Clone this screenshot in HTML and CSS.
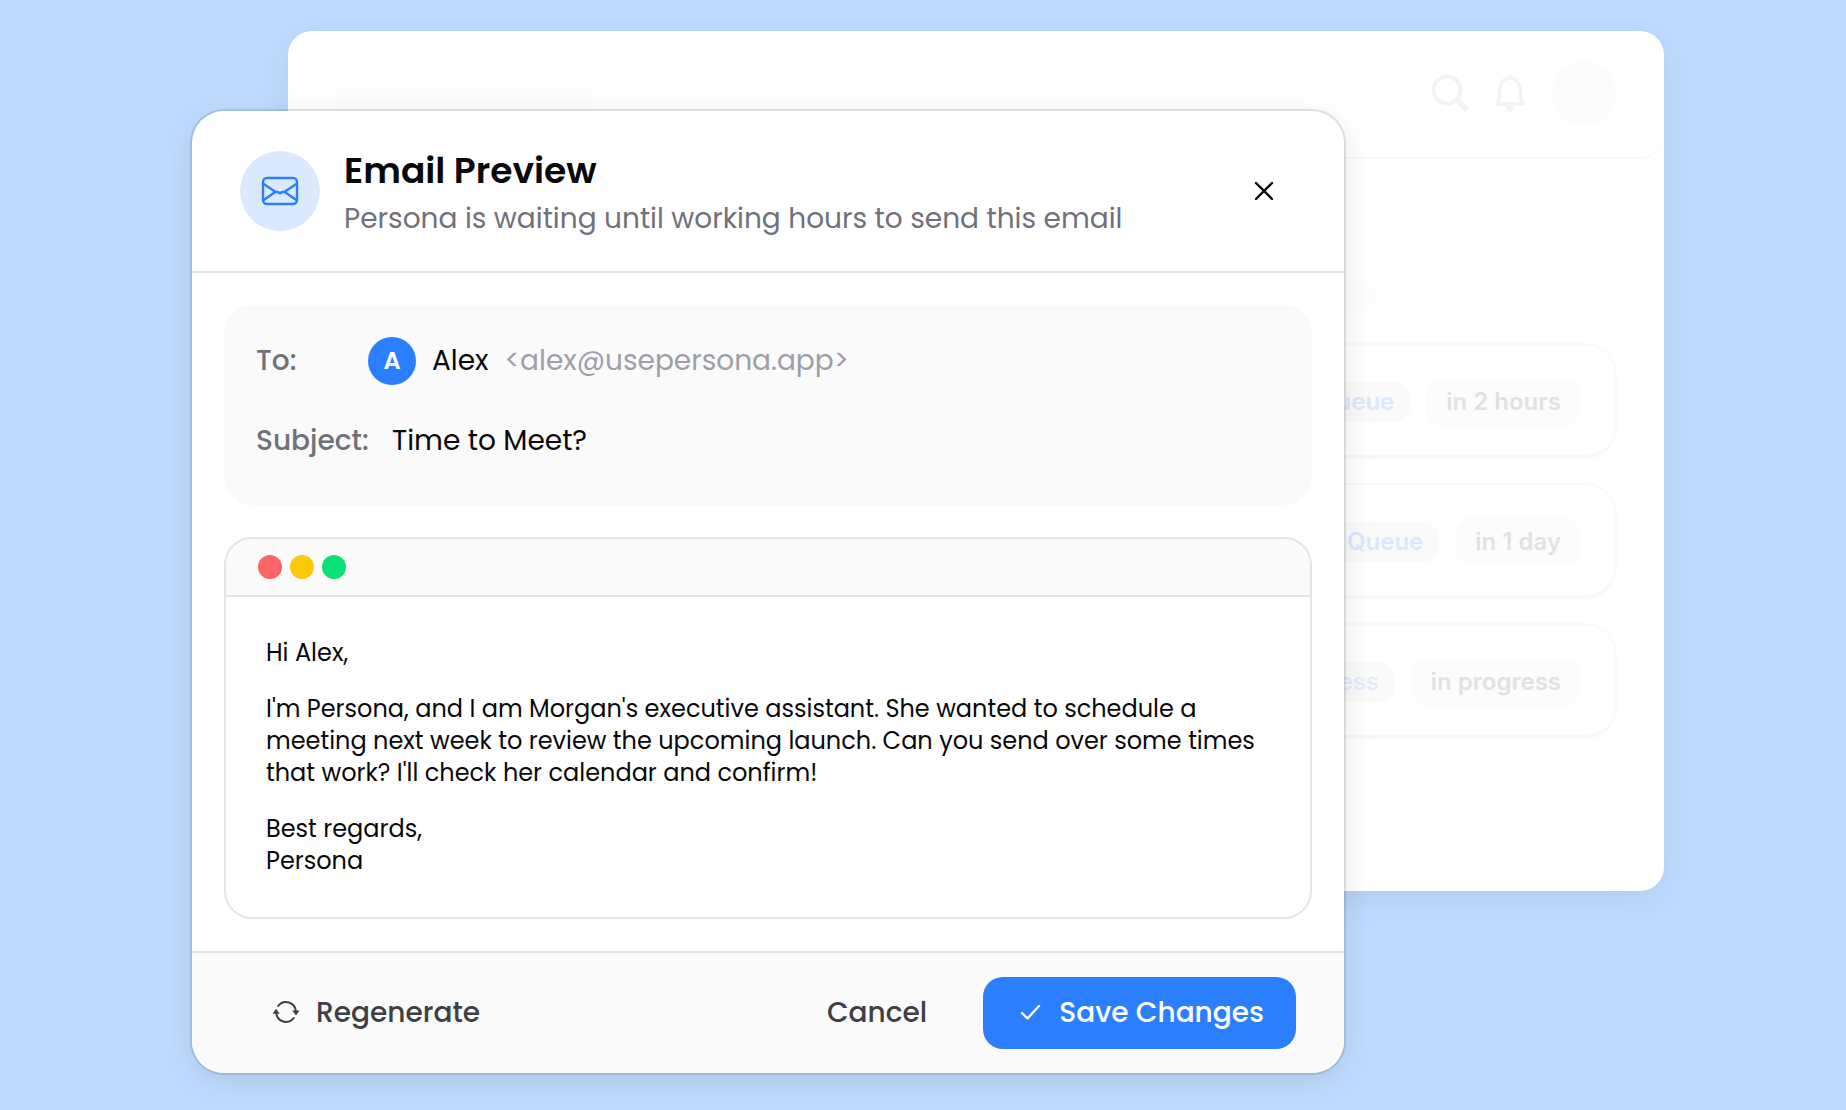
FILE: index.html
```html
<!DOCTYPE html>
<html lang="en">
<head>
    <meta charset="UTF-8">
    <meta name="viewport" content="width=device-width, initial-scale=1.0">
    <title>Email Preview</title>
    <link rel="stylesheet" href="styles.css">
</head>
<body>
    <main class="stage">
        <!-- Faded dashboard behind the dialog -->
        <section class="dashboard" aria-hidden="true">
            <header class="dashboard-header">
                <div class="logo-placeholder"></div>
                <div class="dashboard-tools">
                    <svg class="tool-icon" viewBox="0 0 40 40" fill="none" stroke="currentColor">
                        <circle cx="17" cy="16" r="13.5" stroke-width="4"/>
                        <path d="M27 26l10 10" stroke-width="6"/>
                    </svg>
                    <svg class="tool-icon" viewBox="0 0 40 40" fill="none" stroke="currentColor">
                        <path d="M7 30C10 26 9 20 10 14C11 8 15 4 20 4S29 8 30 14C31 20 30 26 33 30Z" stroke-width="3.5" stroke-linejoin="round"/>
                        <path d="M18 1h4v3h-4zM16 32h8a4 5 0 0 1-8 2z" fill="currentColor" stroke="none"/>
                    </svg>
                    <div class="user-placeholder"></div>
                </div>
            </header>
            <div class="dashboard-body">
                <div class="heading-placeholder"></div>
                <div class="task">
                    <span class="status">Queue</span>
                    <span class="due">in 2 hours</span>
                </div>
                <div class="task">
                    <span class="status">Queue</span>
                    <span class="due">in 1 day</span>
                </div>
                <div class="task">
                    <span class="status status-light">Progress</span>
                    <span class="due">in progress</span>
                </div>
            </div>
        </section>

        <section class="modal" role="dialog" aria-labelledby="modal-title">
            <header class="modal-header">
                <div class="mail-badge">
                    <svg width="40" height="32" viewBox="0 0 40 32" fill="none" stroke="currentColor" stroke-width="2.4" stroke-linejoin="round">
                        <rect x="3" y="3" width="34" height="26" rx="4"/>
                        <path d="M3 8.500l12 8c2 1 3 0 5 2c2-2 3-1 5-2l12-8M3 25.500l13-9M37 25.500l-13-9"/>
                    </svg>
                </div>
                <div class="modal-heading">
                    <h1 id="modal-title">Email Preview</h1>
                    <p>Persona is waiting until working hours to send this email</p>
                </div>
                <button class="close-button" type="button" aria-label="Close">
                    <svg width="24" height="24" viewBox="0 0 24 24" fill="none" stroke="currentColor" stroke-width="2.4" stroke-linecap="round">
                        <path d="M4 4l16 16M20 4L4 20"/>
                    </svg>
                </button>
            </header>

            <div class="modal-body">
                <div class="recipients">
                    <div class="field">
                        <span class="field-label">To:</span>
                        <span class="avatar">A</span>
                        <span class="name">Alex</span>
                        <span class="address">&lt;alex@usepersona.app&gt;</span>
                    </div>
                    <div class="field">
                        <span class="field-label">Subject:</span>
                        <span class="subject">Time to Meet?</span>
                    </div>
                </div>

                <article class="message">
                    <div class="message-bar">
                        <span class="dot dot-red"></span>
                        <span class="dot dot-yellow"></span>
                        <span class="dot dot-green"></span>
                    </div>
                    <div class="message-text">
                        <p>Hi Alex,</p>
                        <p>I'm Persona, and I am Morgan's executive assistant. She wanted to schedule a<br>
                        meeting next week to review the upcoming launch. Can you send over some times<br>
                        that work? I'll check her calendar and confirm!</p>
                        <p>Best regards,<br>Persona</p>
                    </div>
                </article>
            </div>

            <footer class="modal-footer">
                <button class="button" type="button">
                    <svg width="32" height="32" viewBox="0 0 32 32" fill="none" stroke="currentColor" stroke-width="2">
                        <path d="M6.200 9A9.800 9.800 0 0 1 23.800 14.500M21.700 21A9.800 9.800 0 0 1 4.200 16" stroke-linecap="round"/>
                        <path d="M20.200 13.500h7.300L24 18.500zM7.800 16.700H.500L4 11.700z" fill="currentColor" stroke="none"/>
                    </svg>
                    Regenerate
                </button>
                <button class="button button-cancel" type="button">Cancel</button>
                <button class="button button-primary" type="button">
                    <svg width="32" height="32" viewBox="0 0 32 32" fill="none" stroke="currentColor" stroke-width="2.4" stroke-linecap="round" stroke-linejoin="round">
                        <path d="M7 16l5.500 5.500L24 9"/>
                    </svg>
                    Save Changes
                </button>
            </footer>
        </section>
    </main>
</body>
</html>
```
FILE: styles.css
```css
* {
    box-sizing: border-box;
}
body {
    margin: 0;
    background: #bedbff;
    color: #09090b;
    font-family: Poppins, Inter, sans-serif;
    font-size: 28px;
    line-height: 40px;
}
h1, p {
    margin: 0;
}
svg {
    display: block;
    flex: none;
}

/* The dashboard and the dialog share one grid cell */
.stage {
    display: grid;
    align-items: start;
    padding: 31px 182px 37px 192px;
}

/* Dashboard */
.dashboard {
    grid-area: 1 / 1;
    margin-left: 96px;
    padding-bottom: 152px;
    border-radius: 24px;
    background: #fff;
    box-shadow: 0 8px 32px rgba(0, 0, 0, 0.07);
    font-family: Inter, sans-serif;
    font-size: 24px;
    font-weight: 600;
    line-height: 32px;
}
.dashboard-header {
    display: flex;
    justify-content: space-between;
    height: 128px;
    padding: 31px 48px;
    border-bottom: 2px solid #fafafa;
    border-radius: 24px;
}
.logo-placeholder {
    width: 256px;
    height: 64px;
    border-radius: 8px;
    background: #fdfdfd;
}
.dashboard-tools {
    display: flex;
    align-items: center;
    gap: 20px;
    color: #f3f3f3;
}
.tool-icon {
    width: 40px;
    height: 40px;
}
.user-placeholder {
    width: 64px;
    height: 64px;
    margin-left: 2px;
    border-radius: 50%;
    background: #fcfcfc;
}
.dashboard-body {
    display: flex;
    flex-direction: column;
    gap: 24px;
    padding: 122px 47px 0 48px;
}
.heading-placeholder {
    height: 30px;
    margin: 0 66px 8px 0;
    border-radius: 8px;
    background: #fdfdfd;
}
.task {
    display: flex;
    align-items: center;
    justify-content: flex-end;
    gap: 16px;
    height: 116px;
    padding: 4px 34px 0;
    border: 2px solid #fafafa;
    border-bottom: 4px solid #f9f9f9;
    border-radius: 32px;
}
.status {
    padding: 4px 16px;
    border-radius: 16px;
    background: #fafafa;
    color: #dbe8ff;
}
.status-light {
    color: #e4ecfc;
    font-weight: 500;
}
.due {
    padding: 8px 20px;
    border-radius: 16px;
    background: #fcfcfc;
    color: #e2e2e4;
}

/* Dialog */
.modal {
    grid-area: 1 / 1;
    margin: 80px 320px 0 0;
    border-radius: 32px;
    background: #fff;
    box-shadow: 0 0 0 2px rgba(0, 0, 0, 0.1), 0 8px 32px rgba(0, 0, 0, 0.1);
    overflow: hidden;
}
.modal-header {
    display: flex;
    align-items: flex-start;
    gap: 24px;
    padding: 40px 48px 32px;
    border-bottom: 2px solid #e4e4e4;
}
.mail-badge {
    display: flex;
    align-items: center;
    justify-content: center;
    flex: none;
    width: 80px;
    height: 80px;
    border-radius: 50%;
    background: #dbe9ff;
    color: #2b7fff;
}
.modal-heading {
    flex: 1;
}
.modal-heading h1 {
    font-size: 36px;
    font-weight: 600;
    line-height: 40px;
}
.modal-heading p {
    margin-top: 8px;
    color: #71717a;
}
.close-button {
    display: flex;
    align-items: center;
    justify-content: center;
    width: 64px;
    height: 80px;
    padding: 0;
    border: none;
    background: none;
    color: inherit;
    cursor: pointer;
}

.modal-body {
    display: flex;
    flex-direction: column;
    gap: 32px;
    padding: 32px;
}
.recipients {
    padding: 32px 32px 40px;
    border-radius: 28px;
    background: #fafafa;
}
.field {
    display: flex;
    align-items: center;
    height: 48px;
}
.field + .field {
    margin-top: 32px;
}
.field-label {
    width: 112px;
    color: #71717a;
    font-weight: 500;
}
.avatar {
    width: 48px;
    height: 48px;
    margin-right: 16px;
    border-radius: 50%;
    background: #2b7fff;
    color: #fff;
    font-size: 24px;
    font-weight: 600;
    line-height: 48px;
    text-align: center;
}
.address {
    margin-left: 16px;
    color: #9f9fa9;
}
.subject {
    margin-left: 24px;
}

.message {
    border: 2px solid #e4e4e4;
    border-radius: 28px;
    overflow: hidden;
}
.message-bar {
    display: flex;
    gap: 8px;
    padding: 16px 32px;
    border-bottom: 2px solid #e4e4e4;
    background: #fafafa;
}
.dot {
    width: 24px;
    height: 24px;
    border-radius: 50%;
}
.dot-red {
    background: #ff6467;
}
.dot-yellow {
    background: #fcc80a;
}
.dot-green {
    background: #0be074;
}
.message-text {
    padding: 40px;
    font-size: 24px;
    line-height: 32px;
}
.message-text p + p {
    margin-top: 24px;
}

.modal-footer {
    display: flex;
    align-items: center;
    padding: 24px 48px;
    border-top: 2px solid #e4e4e4;
    background: #fafafa;
}
.button {
    display: flex;
    align-items: center;
    gap: 12px;
    height: 72px;
    padding: 0 32px;
    border: none;
    border-radius: 20px;
    background: none;
    color: #3f3f46;
    font: inherit;
    font-weight: 500;
    cursor: pointer;
}
.button-cancel {
    margin: 0 24px 0 auto;
}
.button-primary {
    background: #2b7fff;
    color: #fff;
}
```
